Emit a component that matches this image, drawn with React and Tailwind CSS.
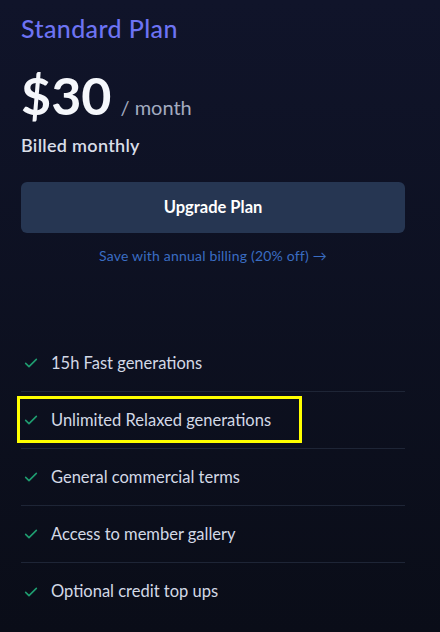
import React from 'react';

const features = [
  '15h Fast generations',
  'Unlimited Relaxed generations',
  'General commercial terms',
  'Access to member gallery',
  'Optional credit top ups',
];

const Check = () => (
  <svg width="16" height="16" viewBox="0 0 24 24" fill="none" stroke="#1f9d70" strokeWidth="2.4" strokeLinecap="round" strokeLinejoin="round">
    <path d="M4 12.5l5 5L20 6.5" />
  </svg>
);

export default function App() {
  return (
    <div
      className="relative w-[440px] h-[632px] overflow-hidden bg-gradient-to-b from-[#10142a] to-[#0a0d18] text-white"
      style={{ fontFamily: 'Lato, "Noto Sans", sans-serif' }}
    >
      <div className="w-[384px] ml-[21px] pt-[12px]">
        <h2 className="text-[25px] leading-[32px] tracking-[0.4px] text-[#6d73f3] font-medium">Standard Plan</h2>

        <div className="flex items-baseline gap-[9px] mt-[24px]">
          <span className="text-[52px] leading-[54px] font-bold text-[#f5f7fb]">$30</span>
          <span className="text-[20px] text-[#a3abc0]">/ month</span>
        </div>
        <p className="mt-[11px] text-[18px] leading-[24px] tracking-[0.3px] font-semibold text-[#d9dee8]">Billed monthly</p>

        <button className="mt-[25px] w-full h-[51px] rounded-[6px] bg-[#263652] text-[16.5px] font-bold text-white">
          Upgrade Plan
        </button>
        <p className="mt-[12px] text-center text-[14px] tracking-[0.2px] text-[#3a6dc2]">
          Save with annual billing (20% off) →
        </p>

        <ul className="mt-[69px]">
          {features.map((f, i) => (
            <li
              key={f}
              className={`flex items-center gap-[12px] h-[57px] pl-[2px] ${i < features.length - 1 ? 'border-b border-[#1e2536]' : ''}`}
            >
              <Check />
              <span className="text-[16.5px] text-[#d3d9e6]">{f}</span>
            </li>
          ))}
        </ul>
      </div>

      <div className="absolute left-[17px] top-[396px] w-[285px] h-[47px] border-[3px] border-[#ffff00]" />
    </div>
  );
}
